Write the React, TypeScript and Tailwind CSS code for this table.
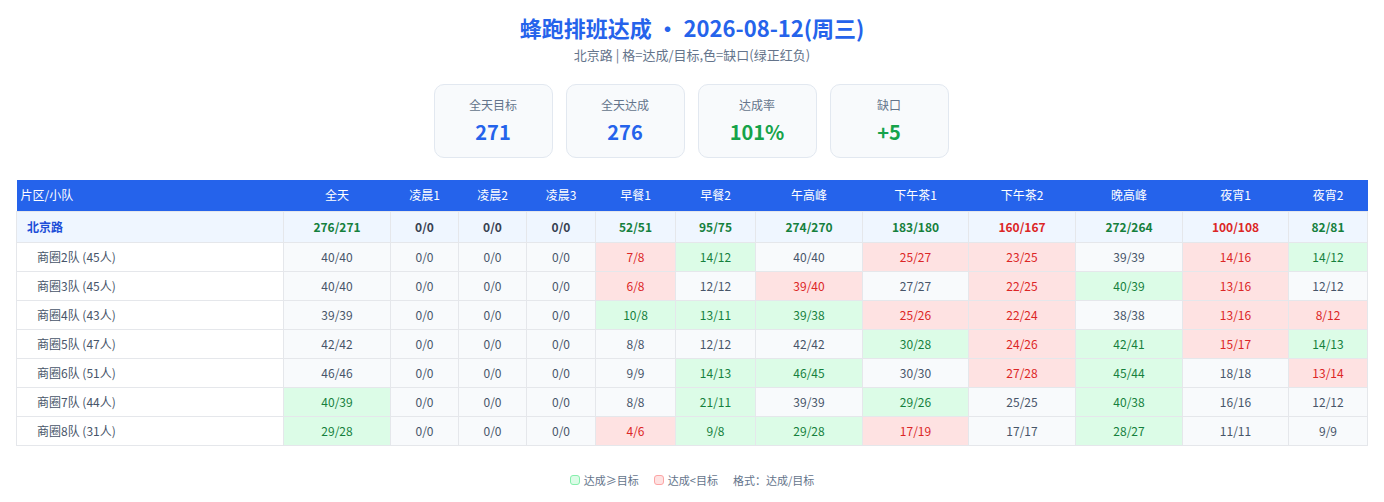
const cols = ["全天", "凌晨1", "凌晨2", "凌晨3", "早餐1", "早餐2", "午高峰", "下午茶1", "下午茶2", "晚高峰", "夜宵1", "夜宵2"];
const widths = [266, 107, 68, 68, 69, 80, 80, 107, 106, 107, 107, 106, 79];

const total = ["276/271", "0/0", "0/0", "0/0", "52/51", "95/75", "274/270", "183/180", "160/167", "272/264", "100/108", "82/81"];

const rows: [string, string[]][] = [
  ["商圈2队 (45人)", ["40/40", "0/0", "0/0", "0/0", "7/8", "14/12", "40/40", "25/27", "23/25", "39/39", "14/16", "14/12"]],
  ["商圈3队 (45人)", ["40/40", "0/0", "0/0", "0/0", "6/8", "12/12", "39/40", "27/27", "22/25", "40/39", "13/16", "12/12"]],
  ["商圈4队 (43人)", ["39/39", "0/0", "0/0", "0/0", "10/8", "13/11", "39/38", "25/26", "22/24", "38/38", "13/16", "8/12"]],
  ["商圈5队 (47人)", ["42/42", "0/0", "0/0", "0/0", "8/8", "12/12", "42/42", "30/28", "24/26", "42/41", "15/17", "14/13"]],
  ["商圈6队 (51人)", ["46/46", "0/0", "0/0", "0/0", "9/9", "14/13", "46/45", "30/30", "27/28", "45/44", "18/18", "13/14"]],
  ["商圈7队 (44人)", ["40/39", "0/0", "0/0", "0/0", "8/8", "21/11", "39/39", "29/26", "25/25", "40/38", "16/16", "12/12"]],
  ["商圈8队 (31人)", ["29/28", "0/0", "0/0", "0/0", "4/6", "9/8", "29/28", "17/19", "17/17", "28/27", "11/11", "9/9"]],
];

const diff = (v: string) => {
  const [a, b] = v.split("/").map(Number);
  return a - b;
};

const cellClass = (v: string) => {
  const d = diff(v);
  if (d > 0) return "bg-[#dcfce7] text-[#15803d]";
  if (d < 0) return "bg-[#fee2e2] text-[#dc2626]";
  return "bg-[#f8fafc] text-[#475569]";
};

const totalClass = (v: string) => {
  const d = diff(v);
  if (d > 0) return "text-[#15803d]";
  if (d < 0) return "text-[#dc2626]";
  return "text-[#374151]";
};

const Stat = ({ label, value, color }: { label: string; value: string; color: string }) => (
  <div className="w-[119px] h-[74px] rounded-[10px] border border-[#e2e8f0] bg-[#f8fafc] flex flex-col items-center pt-[11px]">
    <div className="text-[12px] leading-[18px] text-[#64748b]">{label}</div>
    <div className={"text-[20px] leading-[28px] font-bold mt-[4px] " + color}>{value}</div>
  </div>
);

const App = () => {
  return (
    <div className="min-h-screen bg-white font-['Noto_Sans_CJK_SC','Noto_Sans',sans-serif] px-[17px]">
      <div className="pt-[11px] text-center text-[22px] leading-[32px] font-bold text-[#2563eb]">
        蜂跑排班达成 · 2026-08-12(周三)
      </div>
      <div className="mt-[3px] text-center text-[13px] leading-[18px] text-[#64748b]">
        北京路 | 格=达成/目标,色=缺口(绿正红负)
      </div>
      <div className="mt-[20px] flex justify-center gap-[13px] pr-[2px]">
        <Stat label="全天目标" value="271" color="text-[#2563eb]" />
        <Stat label="全天达成" value="276" color="text-[#2563eb]" />
        <Stat label="达成率" value="101%" color="text-[#16a34a]" />
        <Stat label="缺口" value="+5" color="text-[#16a34a]" />
      </div>

      <table className="mt-[22px] -ml-px w-[1351px] table-fixed border-collapse text-[12px]">
        <colgroup>
          {widths.map((w, i) => (
            <col key={i} style={{ width: i === 0 ? w + 1 : w }} />
          ))}
        </colgroup>
        <thead>
          <tr className="bg-[#2563eb] text-white h-[31px]">
            <th className="font-normal text-left pl-[4px]">片区/小队</th>
            {cols.map((c) => (
              <th key={c} className="font-normal text-center">{c}</th>
            ))}
          </tr>
        </thead>
        <tbody>
          <tr className="bg-[#eff6ff] h-[31px] font-bold">
            <td className="border border-[#e5e7eb] pl-[10px] text-[#1d4ed8]">北京路</td>
            {total.map((v, i) => (
              <td key={i} className={"border border-[#e5e7eb] text-center " + totalClass(v)}>{v}</td>
            ))}
          </tr>
          {rows.map(([name, vals]) => (
            <tr key={name} className="h-[29px]">
              <td className="border border-[#e5e7eb] bg-white pl-[20px] text-[#475569]">{name}</td>
              {vals.map((v, i) => (
                <td key={i} className={"border border-[#e5e7eb] text-center " + cellClass(v)}>{v}</td>
              ))}
            </tr>
          ))}
        </tbody>
      </table>

      <div className="mt-[26px] flex justify-center items-center gap-[15px] text-[11px] leading-[16px] text-[#64748b]">
        <div className="flex items-center gap-[4px]">
          <span className="inline-block w-[10px] h-[10px] rounded-[3px] border border-[#86efac] bg-[#dcfce7]" />
          <span>达成≥目标</span>
        </div>
        <div className="flex items-center gap-[4px]">
          <span className="inline-block w-[10px] h-[10px] rounded-[3px] border border-[#fca5a5] bg-[#fee2e2]" />
          <span>达成&lt;目标</span>
        </div>
        <div>格式：达成/目标</div>
      </div>
    </div>
  );
};

export default App;
